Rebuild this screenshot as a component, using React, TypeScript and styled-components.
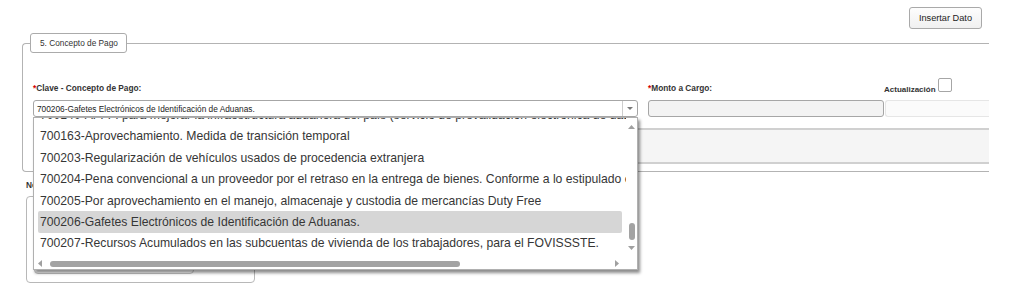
import React from "react";
import styled, { createGlobalStyle } from "styled-components";

const GlobalStyle = createGlobalStyle`
  html, body {
    margin: 0;
    padding: 0;
    background: #fff;
  }
  body {
    font-family: "Liberation Sans", Arial, sans-serif;
    color: #333;
  }
`;

const FONT = `"Liberation Sans", Arial, sans-serif`;

const Page = styled.div`
  width: 1024px;
  height: 293px;
  box-sizing: border-box;
  padding-top: 7px;
  overflow: hidden;
`;

const Toolbar = styled.div`
  display: flex;
  justify-content: flex-end;
  padding-right: 42px;
`;

const Button = styled.button`
  height: 22px;
  padding: 0 9px;
  border: 1px solid #a9a9a9;
  border-radius: 3px;
  background: linear-gradient(#fdfdfd, #f0f0f0);
  font: 9.2px ${FONT};
  color: #222;
`;

const Section = styled.fieldset`
  box-sizing: border-box;
  width: 967px;
  min-width: 0;
  margin: 4px 0 0 22px;
  padding: 25px 0 7px 10px;
  border: 1px solid #b3b3b3;
  border-right: none;
  border-radius: 4px 0 0 4px;
`;

const Legend = styled.legend`
  margin-left: -3px;
  padding: 4px 8px 4px 9px;
  border: 1px solid #ababab;
  border-radius: 3px;
  background: #fff;
  font: 8.3px/10px ${FONT};
  color: #333;
`;

const FieldRow = styled.div`
  display: flex;
  align-items: flex-end;
`;

const Field = styled.div<{ $w?: number; $gap?: number }>`
  position: relative;
  display: flex;
  flex-direction: column;
  width: ${(p) => (p.$w ? `${p.$w}px` : "auto")};
  flex: ${(p) => (p.$w ? "none" : "1")};
  margin-right: ${(p) => p.$gap ?? 0}px;
`;

const Label = styled.label`
  display: block;
  margin-bottom: 6px;
  font: bold 8.3px/11px ${FONT};
  color: #333;
  white-space: nowrap;
`;

const Req = styled.span`
  color: #d40000;
`;

const CheckLabel = styled.label`
  display: flex;
  align-items: baseline;
  gap: 2px;
  margin: 0 0 5px -1px;
  font: bold 8px/11px ${FONT};
  color: #333;
`;

const Check = styled.input.attrs({ type: "checkbox" })`
  appearance: none;
  box-sizing: border-box;
  width: 14px;
  height: 14px;
  margin: 0;
  border: 1px solid #a6a6a6;
  border-radius: 2px;
  background: #fff;
`;

const SelectBox = styled.div`
  box-sizing: border-box;
  height: 17px;
  display: flex;
  align-items: center;
  border: 1px solid #a6a6a6;
  border-radius: 3px;
  background: #fff;
`;

const SelectText = styled.span`
  flex: 1;
  padding-left: 3px;
  font: 8.3px ${FONT};
  color: #222;
  white-space: nowrap;
`;

const SelectArrow = styled.span`
  align-self: stretch;
  width: 14px;
  display: flex;
  align-items: center;
  justify-content: center;
  border-left: 1px solid #cdcdcd;
`;

const TextInput = styled.input<{ $faint?: boolean }>`
  box-sizing: border-box;
  width: 100%;
  height: 17px;
  margin: 0;
  padding: 0;
  border: 1px solid ${(p) => (p.$faint ? "#e6e6e6" : "#a6a6a6")};
  border-right: ${(p) => (p.$faint ? "none" : "1px solid #a6a6a6")};
  border-radius: ${(p) => (p.$faint ? "3px 0 0 3px" : "3px")};
  background: ${(p) => (p.$faint ? "#fbfbfb" : "#f3f3f3")};
`;

const Panel = styled.div`
  box-sizing: border-box;
  height: 36px;
  margin-top: 11px;
  border-top: 2px solid #d0d0d0;
  border-bottom: 2px solid #d0d0d0;
  border-left: 1px solid #d0d0d0;
  background: #f5f5f5;
`;

/* open list of the select */
const Dropdown = styled.div`
  position: absolute;
  top: 100%;
  left: 0;
  z-index: 10;
  box-sizing: border-box;
  width: 100%;
  height: 153px;
  display: grid;
  grid-template-columns: 1fr 11px;
  grid-template-rows: 1fr 12px;
  border: 1px solid #b0b0b0;
  background: #fff;
  box-shadow: 2px 3px 3px rgba(0, 0, 0, 0.45);
`;

const OptionViewport = styled.div`
  overflow: hidden;
`;

const OptionList = styled.ul`
  list-style: none;
  margin: -13.6px 0 0;
  padding: 0;
`;

const Option = styled.li<{ $active?: boolean }>`
  height: 21.4px;
  display: flex;
  align-items: center;
  margin: 0 4px;
  padding-left: 2px;
  border-radius: 2px;
  background: ${(p) => (p.$active ? "#d6d6d6" : "transparent")};
  font: 12.2px/1 ${FONT};
  color: #363636;
  white-space: nowrap;
`;

const VScroll = styled.div`
  display: flex;
  flex-direction: column;
  align-items: center;
  padding: 7px 0 7px;
`;

const VTrack = styled.div`
  flex: 1;
`;

const VThumb = styled.div`
  width: 6px;
  height: 17px;
  margin-top: 94px;
  border-radius: 3px;
  background: #a3a3a3;
`;

const HScroll = styled.div`
  display: flex;
  align-items: center;
  padding: 1px 7px 0 4px;
`;

const HTrack = styled.div`
  flex: 1;
  display: flex;
  align-items: center;
  padding: 0 8px;
`;

const HThumb = styled.div`
  height: 6px;
  border-radius: 3px;
  background: #a3a3a3;
`;

const NoteSection = styled.div`
  margin: 8px 0 0 26px;
`;

const NoteLabel = styled(Label)`
  line-height: 10px;
`;

const NoteBox = styled.div`
  box-sizing: border-box;
  width: 229px;
  height: 87px;
  display: flex;
  padding: 8px 60px 8px 7px;
  border: 1px solid #b8b8b8;
  border-radius: 4px;
`;

const NoteInner = styled.div`
  flex: 1;
  border: 1px solid #c4c4c4;
  border-radius: 4px;
`;

const Arrow: React.FC<{ dir: "up" | "down" | "left" | "right"; color?: string }> = ({
  dir,
  color = "#a0a0a0",
}) => {
  const pts = {
    up: "0,4 3.5,0 7,4",
    down: "0,0 7,0 3.5,4",
    left: "4,0 4,7 0,3.5",
    right: "0,0 4,3.5 0,7",
  }[dir];
  const vertical = dir === "up" || dir === "down";
  return (
    <svg width={vertical ? 7 : 4} height={vertical ? 4 : 7} viewBox={vertical ? "0 0 7 4" : "0 0 4 7"}>
      <polygon points={pts} fill={color} />
    </svg>
  );
};

const options = [
  "700140-AFI-FI para mejorar la infraestructura aduanera del país (servicio de prevalidación electrónica de datos)",
  "700163-Aprovechamiento. Medida de transición temporal",
  "700203-Regularización de vehículos usados de procedencia extranjera",
  "700204-Pena convencional a un proveedor por el retraso en la entrega de bienes. Conforme a lo estipulado en el contrato",
  "700205-Por aprovechamiento en el manejo, almacenaje y custodia de mercancías Duty Free",
  "700206-Gafetes Electrónicos de Identificación de Aduanas.",
  "700207-Recursos Acumulados en las subcuentas de vivienda de los trabajadores, para el FOVISSSTE.",
  "700208-Otros aprovechamientos",
];

const selected = "700206-Gafetes Electrónicos de Identificación de Aduanas.";

const App: React.FC = () => {
  return (
    <>
      <GlobalStyle />
      <Page>
        <Toolbar>
          <Button>Insertar Dato</Button>
        </Toolbar>

        <Section>
          <Legend>5. Concepto de Pago</Legend>

          <FieldRow>
            <Field $w={605} $gap={10}>
              <Label>
                <Req>*</Req>Clave - Concepto de Pago:
              </Label>
              <SelectBox>
                <SelectText>{selected}</SelectText>
                <SelectArrow>
                  <svg width="6" height="3" viewBox="0 0 6 3">
                    <polygon points="0,0 6,0 3,3" fill="#7a7a7a" />
                  </svg>
                </SelectArrow>
              </SelectBox>

              <Dropdown>
                <OptionViewport>
                  <OptionList>
                    {options.map((o) => (
                      <Option key={o} $active={o === selected}>
                        {o}
                      </Option>
                    ))}
                  </OptionList>
                </OptionViewport>
                <VScroll>
                  <Arrow dir="up" />
                  <VTrack>
                    <VThumb />
                  </VTrack>
                  <Arrow dir="down" />
                </VScroll>
                <HScroll>
                  <Arrow dir="left" />
                  <HTrack>
                    <HThumb style={{ width: 410 }} />
                  </HTrack>
                  <Arrow dir="right" />
                </HScroll>
              </Dropdown>
            </Field>

            <Field $w={236} $gap={1}>
              <Label>
                <Req>*</Req>Monto a Cargo:
              </Label>
              <TextInput />
            </Field>

            <Field>
              <CheckLabel>
                Actualización
                <Check />
              </CheckLabel>
              <TextInput $faint />
            </Field>
          </FieldRow>

          <Panel />
        </Section>

        <NoteSection>
          <NoteLabel>Notas Adicionales:</NoteLabel>
          <NoteBox>
            <NoteInner />
          </NoteBox>
        </NoteSection>
      </Page>
    </>
  );
};

export default App;
